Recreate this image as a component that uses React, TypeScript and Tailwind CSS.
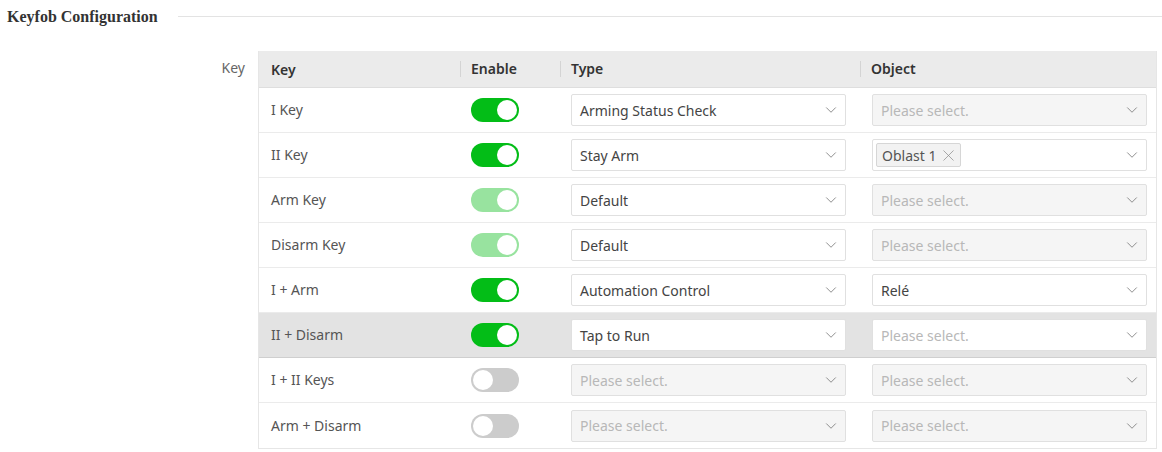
import { ChevronDown, X } from 'lucide-react';

type Toggle = 'on' | 'locked' | 'off';

type KeyRow = {
  name: string;
  toggle: Toggle;
  type?: string;
  object?: string;
  tag?: string;
  active?: boolean;
};

const rows: KeyRow[] = [
  { name: 'I Key', toggle: 'on', type: 'Arming Status Check' },
  { name: 'II Key', toggle: 'on', type: 'Stay Arm', tag: 'Oblast 1' },
  { name: 'Arm Key', toggle: 'locked', type: 'Default' },
  { name: 'Disarm Key', toggle: 'locked', type: 'Default' },
  { name: 'I + Arm', toggle: 'on', type: 'Automation Control', object: 'Relé' },
  { name: 'II + Disarm', toggle: 'on', type: 'Tap to Run', active: true },
  { name: 'I + II Keys', toggle: 'off' },
  { name: 'Arm + Disarm', toggle: 'off' },
];

const Switch = ({ state }: { state: Toggle }) => {
  const track =
    state === 'on' ? 'bg-[#03bd17]' : state === 'locked' ? 'bg-[#98e39f]' : 'bg-[#cccccc]';
  return (
    <div className={`flex h-[24px] w-[48px] items-center rounded-full px-[2px] ${track} ${state === 'off' ? 'justify-start' : 'justify-end'}`}>
      <div className="h-[20px] w-[20px] rounded-full bg-white" />
    </div>
  );
};

const Select = ({
  value,
  tag,
  disabled,
}: {
  value?: string;
  tag?: string;
  disabled?: boolean;
}) => (
  <div
    className={`flex h-[32px] w-[275px] items-center justify-between rounded-[2px] border border-[#e0e0e0] pr-[5px] ${
      tag ? 'pl-[3px]' : 'pl-[8px]'
    } ${disabled ? 'bg-[#f5f5f5]' : 'bg-white'}`}
  >
    {tag ? (
      <span className="flex h-[24px] items-center gap-[3px] rounded-[2px] border border-[#d6d6d6] bg-[#f2f2f2] pl-[5px] pr-[2px] text-[#555]">
        {tag}
        <X size={19} strokeWidth={0.9} className="text-[#888]" />
      </span>
    ) : value ? (
      <span className="text-[#444]">{value}</span>
    ) : (
      <span className="text-[#b8b8b8]">Please select.</span>
    )}
    <ChevronDown size={18} strokeWidth={1.1} className="text-[#777]" />
  </div>
);

export default function App() {
  return (
    <div className="h-[452px] w-[1162px] bg-white font-['Noto_Sans',sans-serif] text-[14px]">
      {/* section heading */}
      <div className="flex h-[33px] items-center pl-[7px]">
        <h2 className="mr-[20px] font-['Liberation_Serif',serif] text-[16px] font-bold text-[#333]">
          Keyfob Configuration
        </h2>
        <div className="h-px flex-1 bg-[#e3e3e3]" />
      </div>

      <div className="mt-[18px] flex">
        <div className="w-[258px] pr-[13px] pt-[6px] text-right text-[#666]">Key</div>

        <div className="w-[899px] border-x border-b border-[#e6e6e6]">
          {/* header */}
          <div className="flex h-[37px] items-center border-b border-[#dedede] bg-[#ebebeb] font-semibold text-[#333]">
            <div className="w-[201px] pl-[12px]">Key</div>
            <div className="w-[100px] border-l border-[#d4d4d4] pl-[10px] leading-[16px]">Enable</div>
            <div className="w-[300px] border-l border-[#d4d4d4] pl-[10px] leading-[16px]">Type</div>
            <div className="flex-1 border-l border-[#d4d4d4] pl-[10px] leading-[16px]">Object</div>
          </div>

          {rows.map((r, i) => (
            <div
              key={r.name}
              className={`flex h-[45px] items-center ${i < rows.length - 1 ? 'border-b' : ''} ${
                r.active ? 'border-[#cfcfcf] bg-[#e3e3e3]' : 'border-[#ebebeb]'
              }`}
            >
              <div className="w-[201px] pb-px pl-[12px] text-[#555]">{r.name}</div>
              <div className="w-[100px] pl-[11px]">
                <Switch state={r.toggle} />
              </div>
              <div className="w-[300px] pl-[11px]">
                <Select value={r.type} disabled={!r.type} />
              </div>
              <div className="flex-1 pl-[12px]">
                <Select value={r.object} tag={r.tag} disabled={!r.active && !r.object && !r.tag} />
              </div>
            </div>
          ))}
        </div>
      </div>
    </div>
  );
}
